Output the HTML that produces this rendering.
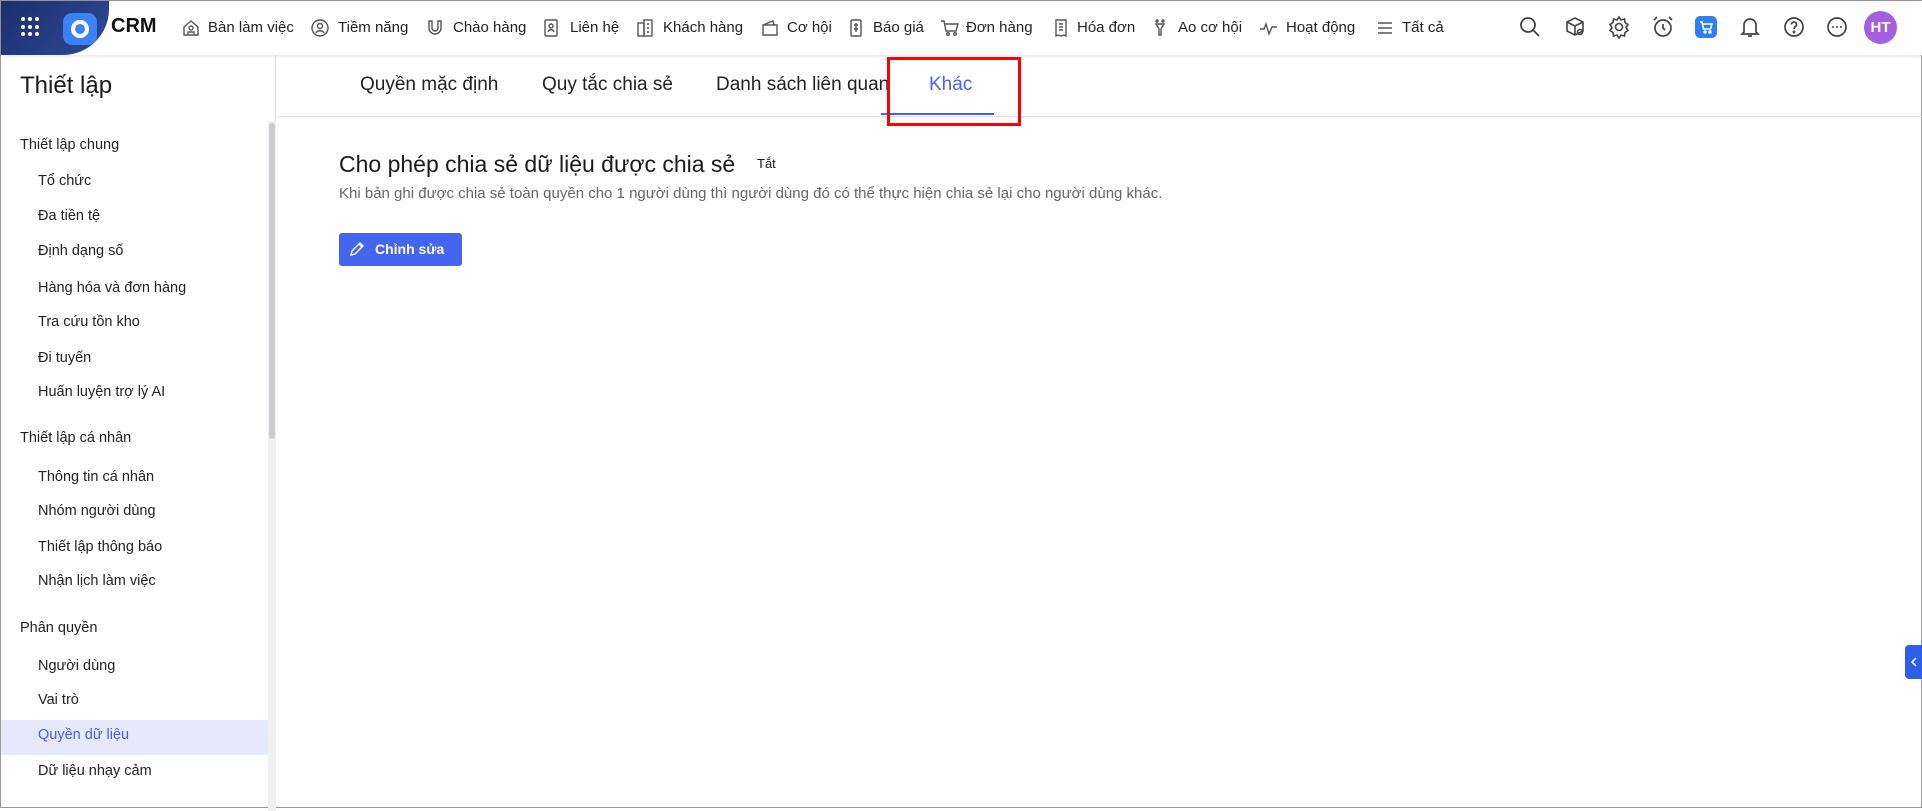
<!DOCTYPE html>
<html><head><meta charset="utf-8"><style>
*{box-sizing:border-box;margin:0;padding:0}
body{width:1922px;height:808px;overflow:hidden;background:#fff;font-family:"Liberation Sans","Noto Sans CJK SC",sans-serif;color:#1f1f1f;position:relative;border:1px solid #999}
.hdr{position:absolute;left:0;top:0;width:1922px;height:54px;background:#fff;box-shadow:0 1px 4px rgba(0,0,0,.12);z-index:2}
.banner{position:absolute;left:0;top:0;width:108px;height:54px;background:linear-gradient(135deg,#1d2f6b,#2d4a9a);border-bottom-right-radius:46px}
.nav{position:absolute;top:18px;font-size:15px;color:#222;white-space:nowrap}
.ico{position:absolute;top:17px}
.side{position:absolute;left:0;top:54px;width:275px;height:754px;border-right:1px solid #ddd}
.sb{position:absolute;left:267px;top:66px;width:8px;height:690px;background:#f0f0f0}
.sb i{position:absolute;left:1px;top:2px;width:6px;height:316px;background:#c9cbd0;border-radius:3px}
.sec{position:absolute;left:19px;font-size:14.5px;color:#222;font-weight:500}
.it{position:absolute;left:37px;font-size:14.5px;color:#222}
.tab{position:absolute;top:73px;font-size:19px;color:#222}
</style></head><body>
<div class="hdr">
 <div class="banner"></div>
 <div style="position:absolute;left:20px;top:16px;width:20px;height:20px;display:grid;grid-template-columns:repeat(3,4px);gap:3px">
  <i style="background:#fff;border-radius:50%;height:4px"></i><i style="background:#fff;border-radius:50%;height:4px"></i><i style="background:#fff;border-radius:50%;height:4px"></i><i style="background:#fff;border-radius:50%;height:4px"></i><i style="background:#fff;border-radius:50%;height:4px"></i><i style="background:#fff;border-radius:50%;height:4px"></i><i style="background:#fff;border-radius:50%;height:4px"></i><i style="background:#fff;border-radius:50%;height:4px"></i><i style="background:#fff;border-radius:50%;height:4px"></i>
 </div>
 <div style="position:absolute;left:62px;top:12px;width:34px;height:32px;background:#3b82f6;border-radius:9px"></div>
 <div style="position:absolute;left:70px;top:19px;width:18px;height:18px;border:4px solid #fff;border-radius:50%"></div>
 <div style="position:absolute;left:110px;top:14px;font-size:20px;font-weight:bold;color:#111">CRM</div>
 <svg class="ico" style="left:180px" width="20" height="20" viewBox="0 0 20 20" fill="none" stroke="#555" stroke-width="1.4"><path d="M3 9l7-6 7 6v8H3z"/><circle cx="10" cy="10" r="2"/><path d="M7 17v-3h6v3"/></svg>
 <div class="nav" style="left:207px">Bàn làm việc</div>
 <svg class="ico" style="left:309px" width="20" height="20" viewBox="0 0 20 20" fill="none" stroke="#555" stroke-width="1.4"><circle cx="10" cy="10" r="8"/><circle cx="10" cy="8" r="2.5"/><path d="M6 15c1-3 7-3 8 0"/></svg>
 <div class="nav" style="left:337px">Tiềm năng</div>
 <svg class="ico" style="left:424px" width="20" height="20" viewBox="0 0 20 20" fill="none" stroke="#555" stroke-width="1.4"><path d="M4 3v7a6 6 0 0012 0V3h-3v7a3 3 0 01-6 0V3z"/></svg>
 <div class="nav" style="left:452px">Chào hàng</div>
 <svg class="ico" style="left:540px" width="20" height="20" viewBox="0 0 20 20" fill="none" stroke="#555" stroke-width="1.4"><rect x="4" y="2" width="12" height="16" rx="1"/><circle cx="10" cy="8" r="2"/><path d="M7 14c1-3 5-3 6 0"/></svg>
 <div class="nav" style="left:569px">Liên hệ</div>
 <svg class="ico" style="left:634px" width="20" height="20" viewBox="0 0 20 20" fill="none" stroke="#555" stroke-width="1.4"><rect x="3" y="5" width="6" height="13"/><rect x="9" y="2" width="8" height="16"/><path d="M12 6h2M12 10h2M12 14h2"/></svg>
 <div class="nav" style="left:662px">Khách hàng</div>
 <svg class="ico" style="left:759px" width="20" height="20" viewBox="0 0 20 20" fill="none" stroke="#555" stroke-width="1.4"><path d="M3 7h14v10H3zM3 7l10-4 1 4"/></svg>
 <div class="nav" style="left:786px">Cơ hội</div>
 <svg class="ico" style="left:845px" width="20" height="20" viewBox="0 0 20 20" fill="none" stroke="#555" stroke-width="1.4"><rect x="5" y="2" width="10" height="16" rx="1"/><path d="M10 5v9M8 7h4M8 11h4"/></svg>
 <div class="nav" style="left:872px">Báo giá</div>
 <svg class="ico" style="left:939px" width="20" height="20" viewBox="0 0 20 20" fill="none" stroke="#555" stroke-width="1.4"><path d="M1 3h3l2 10h10l2-7H5"/><circle cx="8" cy="16" r="1.3"/><circle cx="15" cy="16" r="1.3"/></svg>
 <div class="nav" style="left:965px">Đơn hàng</div>
 <svg class="ico" style="left:1050px" width="20" height="20" viewBox="0 0 20 20" fill="none" stroke="#555" stroke-width="1.4"><path d="M5 2h10v16l-2-1-3 1-3-1-2 1z"/><path d="M8 6h4M8 9h4M8 12h4"/></svg>
 <div class="nav" style="left:1076px">Hóa đơn</div>
 <svg class="ico" style="left:1149px" width="20" height="20" viewBox="0 0 20 20" fill="none" stroke="#555" stroke-width="1.4"><path d="M6 6h8l-3 5v6h-2v-6z"/><circle cx="7" cy="3" r="1"/><circle cx="13" cy="3" r="1"/></svg>
 <div class="nav" style="left:1177px">Ao cơ hội</div>
 <svg class="ico" style="left:1258px" width="20" height="20" viewBox="0 0 20 20" fill="none" stroke="#555" stroke-width="1.4"><path d="M1 11h4l2-5 3 10 3-7h5"/></svg>
 <div class="nav" style="left:1285px">Hoạt động</div>
 <svg class="ico" style="left:1374px" width="20" height="20" viewBox="0 0 20 20" fill="none" stroke="#555" stroke-width="1.4"><path d="M3 5h14M3 10h14M3 15h14"/></svg>
 <div class="nav" style="left:1401px">Tất cả</div>
 <svg class="ico" style="left:1517px;top:14px" width="24" height="24" viewBox="0 0 24 24" fill="none" stroke="#444" stroke-width="1.8"><circle cx="10" cy="10" r="7"/><path d="M15 15l6 6"/></svg>
 <svg class="ico" style="left:1562px;top:14px" width="24" height="24" viewBox="0 0 24 24" fill="none" stroke="#444" stroke-width="1.6"><path d="M12 3l8 4v9l-8 4-8-4V7zM4 7l8 4 8-4M12 11v9"/><circle cx="17" cy="17" r="2.5"/></svg>
 <svg class="ico" style="left:1606px;top:14px" width="24" height="24" viewBox="0 0 24 24" fill="none" stroke="#444" stroke-width="1.6"><circle cx="12" cy="12" r="3.5"/><path d="M12 2l2 3 3.5-1 .5 3.5 3 2-2 3 2 3-3 2-.5 3.5-3.5-1-2 3-2-3-3.5 1-.5-3.5-3-2 2-3-2-3 3-2 .5-3.5 3.5 1z"/></svg>
 <svg class="ico" style="left:1650px;top:14px" width="24" height="24" viewBox="0 0 24 24" fill="none" stroke="#444" stroke-width="1.7"><circle cx="12" cy="13" r="8"/><path d="M12 9v4l2 2M3 5l3-3M21 5l-3-3"/></svg>
 <div style="position:absolute;left:1694px;top:15px;width:22px;height:22px;background:#2f7ff2;border-radius:5px"></div>
 <svg class="ico" style="left:1697px;top:18px" width="16" height="16" viewBox="0 0 16 16" fill="none" stroke="#fff" stroke-width="1.5"><path d="M2 3h2l1.5 7h7l1.5-5H5"/><circle cx="7" cy="13" r="1"/><circle cx="12" cy="13" r="1"/></svg>
 <svg class="ico" style="left:1737px;top:14px" width="24" height="24" viewBox="0 0 24 24" fill="none" stroke="#444" stroke-width="1.7"><path d="M6 17V10a6 6 0 0112 0v7l2 2H4zM10 21h4"/></svg>
 <svg class="ico" style="left:1781px;top:14px" width="24" height="24" viewBox="0 0 24 24" fill="none" stroke="#444" stroke-width="1.7"><circle cx="12" cy="12" r="9"/><path d="M9.5 9.5a2.5 2.5 0 114 2c-1 .7-1.5 1.2-1.5 2.5"/><circle cx="12" cy="17" r=".6"/></svg>
 <svg class="ico" style="left:1824px;top:14px" width="24" height="24" viewBox="0 0 24 24" fill="none" stroke="#444" stroke-width="1.7"><circle cx="12" cy="12" r="9"/><circle cx="8" cy="12" r="1" fill="#444" stroke="none"/><circle cx="12" cy="12" r="1" fill="#444" stroke="none"/><circle cx="16" cy="12" r="1" fill="#444" stroke="none"/></svg>
 <div style="position:absolute;left:1863px;top:10px;width:33px;height:33px;border-radius:50%;background:#a35fe0;color:#fff;font-weight:bold;font-size:15px;text-align:center;line-height:33px">HT</div>
</div>

<div class="side">
 <div style="position:absolute;left:19px;top:17px;font-size:24px;color:#1a1a1a">Thiết lập</div>
 <div class="sb"><i></i></div>
 <div style="position:absolute;left:0;top:665px;width:267px;height:35px;background:#e6e9fb"></div>
 <div class="sec" style="top:82px">Thiết lập chung</div>
 <div class="it" style="top:118px">Tổ chức</div>
 <div class="it" style="top:153px">Đa tiền tệ</div>
 <div class="it" style="top:188px">Định dạng số</div>
 <div class="it" style="top:225px">Hàng hóa và đơn hàng</div>
 <div class="it" style="top:259px">Tra cứu tồn kho</div>
 <div class="it" style="top:295px">Đi tuyến</div>
 <div class="it" style="top:329px">Huấn luyện trợ lý AI</div>
 <div class="sec" style="top:375px">Thiết lập cá nhân</div>
 <div class="it" style="top:414px">Thông tin cá nhân</div>
 <div class="it" style="top:448px">Nhóm người dùng</div>
 <div class="it" style="top:484px">Thiết lập thông báo</div>
 <div class="it" style="top:518px">Nhận lịch làm việc</div>
 <div class="sec" style="top:565px">Phân quyền</div>
 <div class="it" style="top:603px">Người dùng</div>
 <div class="it" style="top:637px">Vai trò</div>
 <div class="it" style="top:672px;color:#4a5ee8">Quyền dữ liệu</div>
 <div class="it" style="top:708px">Dữ liệu nhạy cảm</div>
</div>

<div style="position:absolute;left:276px;top:115px;width:1646px;height:1px;background:#e3e3e3"></div>
<div class="tab" style="left:359px">Quyền mặc định</div>
<div class="tab" style="left:541px">Quy tắc chia sẻ</div>
<div class="tab" style="left:715px">Danh sách liên quan</div>
<div class="tab" style="left:928px;color:#4a62e8">Khác</div>
<div style="position:absolute;left:880px;top:112px;width:113px;height:2px;background:#4a62e8"></div>
<div style="position:absolute;left:886px;top:56px;width:134px;height:69px;border:3px solid #f00"></div>

<div style="position:absolute;left:338px;top:150px;font-size:23px;color:#1a1a1a">Cho phép chia sẻ dữ liệu được chia sẻ</div>
<div style="position:absolute;left:756px;top:155px;font-size:13px;color:#1a1a1a">Tắt</div>
<div style="position:absolute;left:338px;top:184px;font-size:15px;color:#666">Khi bản ghi được chia sẻ toàn quyền cho 1 người dùng thì người dùng đó có thể thực hiện chia sẻ lại cho người dùng khác.</div>
<div style="position:absolute;left:338px;top:232px;width:123px;height:33px;background:#4565ef;border-radius:3px;color:#fff;font-size:14px;font-weight:bold;line-height:33px;padding-left:36px">Chỉnh sửa</div>
<svg style="position:absolute;left:348px;top:240px" width="16" height="16" viewBox="0 0 16 16" fill="none" stroke="#fff" stroke-width="1.4"><path d="M2 14l1-4 8-8 3 3-8 8zM10 3l3 3"/></svg>

<div style="position:absolute;left:1904px;top:644px;width:18px;height:34px;background:#2e5fe6;border-radius:4px 0 0 4px"></div>
<svg style="position:absolute;left:1908px;top:655px" width="10" height="12" viewBox="0 0 10 12" fill="none" stroke="#fff" stroke-width="1.5"><path d="M7 2L3 6l4 4"/></svg>
</body></html>
